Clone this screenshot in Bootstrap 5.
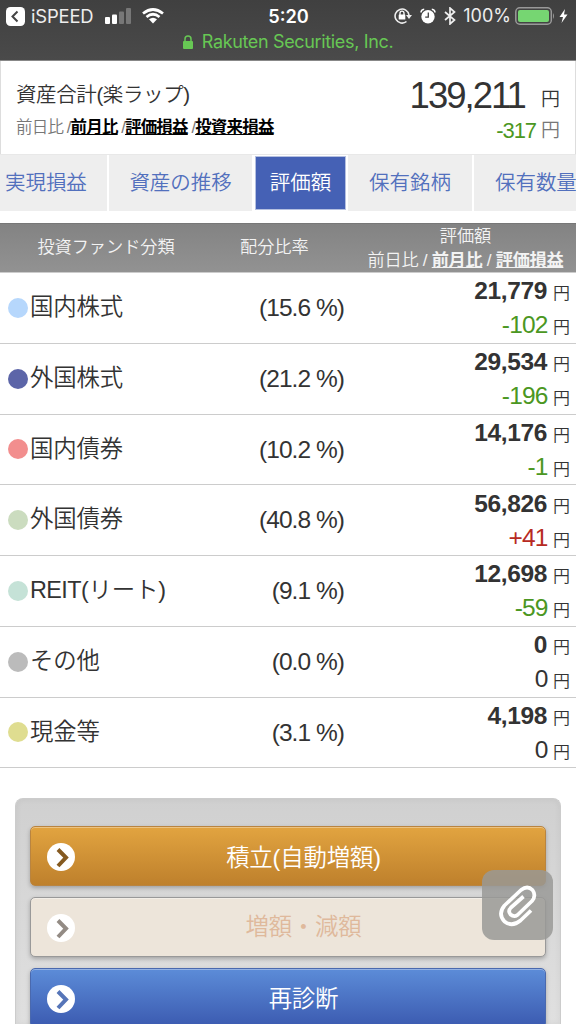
<!DOCTYPE html>
<html lang="ja">
<head>
<meta charset="utf-8">
<meta name="viewport" content="width=device-width, initial-scale=1">
<title>楽ラップ 評価額</title>
<link rel="stylesheet" href="https://cdn.jsdelivr.net/npm/bootstrap@5.3.0/dist/css/bootstrap.min.css">
<style>
body{font-family:"Liberation Sans","Noto Sans CJK JP",sans-serif;font-weight:350;color:#333;background:#fff;height:1024px;overflow:hidden;line-height:1;display:flex;flex-direction:column}
b{font-weight:700}
main{flex:1 1 0;min-height:0;display:flex;flex-direction:column}
.topbar{height:61px;flex:none;background:linear-gradient(#404040,#4a4a4a);border-bottom:1px solid #888;color:#eee;font-family:Inter,sans-serif;font-weight:400}
.statusline{height:31px;padding:1px 5px 0 6px;font-size:18.4px}
.statusline>div{flex:1 1 0}
.clock{font-weight:600;font-size:18.2px;color:#fff}
.site{height:22px;font-size:18px;letter-spacing:-.35px;color:#67c754}
.summary{height:93px;flex:none;padding:20px 15px 0 15px;border-left:1px solid #ddd;border-right:1px solid #ddd}
.sumtitle{font-size:20.5px;line-height:28px;letter-spacing:-.4px}
.sumlinks{font-size:16.5px;line-height:20px;margin-top:8px;letter-spacing:-.8px;color:#777}
.sumlinks span{letter-spacing:-.9px}
.sumlinks b{color:#000;text-decoration:underline;text-underline-offset:1px}
.total{font-size:36.5px;line-height:30px;letter-spacing:-2px}
.yen{font-size:19px;letter-spacing:0}
.total .yen{position:relative;top:-2px;margin-left:8px}
.totaldiff{font-size:22px;line-height:26px;margin-top:1px;letter-spacing:-1.1px;color:#777}
.totaldiff .yen{position:relative;top:-1px}
.down{color:#4b9722}.up{color:#b72a22}
.tabstrip{height:57px;flex:none;border-top:1px solid #e8e8e8;overflow:hidden}
.tabstrip .tabitem{height:56px;flex:none;background:#eee;color:#5270bd;font-size:20.5px;border-right:2px solid #fff;letter-spacing:-.05px}
.tabstrip .current{background:#4561b5;color:#fff;height:54px;margin:1px 2px 0 1px;border:1px solid #b5c0e0}
.fundhead{height:50px;flex:none;margin-top:12px;background:linear-gradient(#838383,#929292);border-top:1px solid #777;border-bottom:1.5px solid #ccc;color:#f3f3f3;font-size:17.2px;letter-spacing:-.05px}
.fundhead .links{letter-spacing:-.3px}
.fundrow{height:70.75px;flex:none;border-bottom:1.5px solid #ccc}
.gridcols{display:grid;grid-template-columns:212px 132px 1fr}
.dot{width:20px;height:20px;border-radius:50%;margin-left:8px;margin-right:2px;flex:none}
.fundname{font-size:23.4px;letter-spacing:-.15px}
.reit{letter-spacing:-.6px}
.ratio{font-size:24.5px;letter-spacing:-.95px;padding-top:1px}
.value{font-size:24.5px;line-height:34px;padding:1px 6px 0 0}
.value b{font-size:24.5px;letter-spacing:-.35px}
.value .yen{font-size:17px;margin-left:6px}
.value .chg{letter-spacing:-.85px;margin-right:-.5px}
.value .fig{display:flex;justify-content:flex-end;align-items:baseline;height:34px}
.panel{flex:1 1 0;min-height:0;overflow:hidden;margin:30px 15px 0;padding:27px 14px 0;border:1px solid #ccc;border-bottom:0;border-radius:8px 8px 0 0;background:linear-gradient(#d0d0d0,#e0e0e0);box-shadow:inset 0 0 6px rgba(0,0,0,.06)}
.action{width:100%;height:60px;padding:4px 0 0 31px;border-radius:5px;margin-bottom:10.7px;font-size:23.4px;font-weight:350;letter-spacing:-.15px;color:#fff;box-shadow:inset 0 1px 0 rgba(255,255,255,.35),0 2px 4px rgba(0,0,0,.25)}
.pale.action{padding-top:2px}
.action svg{left:15px;top:15px}
.gold{background:linear-gradient(#e2a440,#be802c);border:1.5px solid #b98440}
.pale,.pale:disabled{background:#ede5da;border:1.5px solid #999;color:#dfb99c;opacity:1}
.blue{background:linear-gradient(#5c8cd8,#3b5ab0);border:1.5px solid #4a69ae}
.clip{left:482px;top:870px;width:71px;height:70px;border-radius:12px;background:rgba(153,153,150,.84);border:0}
</style>
</head>
<body>
<header class="topbar">
  <div class="statusline d-flex align-items-center">
    <div class="d-flex align-items-center">
      <svg width="19" height="19" viewBox="0 0 19 19"><rect width="19" height="19" rx="4.5" fill="#fff"/><path d="M11.5 4.5 6.5 9.5l5 5" fill="none" stroke="#444" stroke-width="2"/></svg>
      <span style="margin-left:6px;letter-spacing:-.15px">iSPEED</span>
      <svg width="27" height="16" viewBox="0 0 27 16" style="margin-left:12px"><g fill="#fff"><rect y="9" width="5" height="7" rx="1"/><rect x="7" y="6.500" width="5" height="9.500" rx="1"/></g><g fill="#777"><rect x="14" y="3.500" width="5" height="12.500" rx="1"/><rect x="21" y="0" width="5" height="16" rx="1"/></g></svg>
      <svg width="22" height="16" viewBox="0 0 22 16" style="margin-left:10px"><g fill="none" stroke="#fff" stroke-width="2.700"><path d="M1 5.500Q11-2.500 21 5.500"/><path d="M4.500 9Q11 3.500 17.500 9"/></g><path d="M7 11.300Q11 8 15 11.300L11 15.500Z" fill="#fff"/></svg>
    </div>
    <span class="clock">5:20</span>
    <div class="d-flex align-items-center justify-content-end">
      <svg width="18" height="18" viewBox="0 0 18 18"><path d="M12.500 14.500A7 7 0 1 1 15 8" fill="none" stroke="#eee" stroke-width="1.600"/><path d="M12 8h6l-3 4Z" fill="#eee"/><rect x="4.700" y="7.500" width="6.600" height="5" rx=".5" fill="#fff"/><path d="M6 8V6.200a2 2 0 0 1 4 0V8" fill="none" stroke="#fff" stroke-width="1.300"/></svg>
      <svg width="16" height="16" viewBox="0 0 16 16" style="margin-left:8px"><circle cx="8" cy="8.700" r="6.700" fill="#fff"/><path d="M8.300 4.500v4.700H5.200" fill="none" stroke="#444" stroke-width="1.300"/><path d="M1 4.500Q1 1.500 4.200 1.200M15 4.500Q15 1.500 11.800 1.200" fill="none" stroke="#fff" stroke-width="1.500"/></svg>
      <svg width="12" height="18" viewBox="0 0 12 18" style="margin-left:8px"><path d="M1 5l9.500 8L6 17V1l4.500 4L1 13" fill="none" stroke="#eee" stroke-width="1.700"/></svg>
      <span style="margin-left:7px;font-size:18px">100%</span>
      <svg width="41" height="18" viewBox="0 0 41 18" style="margin-left:4px"><rect x=".8" y=".8" width="35.500" height="16.400" rx="4" fill="none" stroke="#999" stroke-width="1.500"/><rect x="3" y="3" width="31" height="12" rx="2" fill="#76d672"/><path d="M38 6q2 3 0 6Z" fill="#999"/></svg>
      <svg width="9" height="16" viewBox="0 0 9 16" style="margin-left:3px;margin-right:3px"><path d="M6 1 .5 9H4L2.500 15 8.500 6.500H5Z" fill="#fff"/></svg>
    </div>
  </div>
  <div class="site d-flex align-items-center justify-content-center">
    <svg width="10" height="14" viewBox="0 0 10 14" style="margin-right:9px"><rect y="6" width="10" height="8" rx="1" fill="#67c754"/><path d="M2 7V4a3 3 0 0 1 6 0v3" fill="none" stroke="#67c754" stroke-width="1.500"/></svg>
    <span>Rakuten Securities, Inc.</span>
  </div>
</header>

<section class="summary d-flex justify-content-between">
  <div>
    <div class="sumtitle">資産合計(楽ラップ)</div>
    <div class="sumlinks text-nowrap">前日比<span> /</span><b>前月比</b><span> /</span><b>評価損益</b><span> /</span><b>投資来損益</b></div>
  </div>
  <div class="text-end">
    <div class="total">139,211 <span class="yen">円</span></div>
    <div class="totaldiff"><span class="down">-317</span> <span class="yen">円</span></div>
  </div>
</section>

<nav class="tabstrip d-flex">
  <div class="tabitem d-flex align-items-center" style="width:109px;padding-left:5px">実現損益</div>
  <div class="tabitem d-flex align-items-center justify-content-center" style="width:145px">資産の推移</div>
  <div class="tabitem current d-flex align-items-center justify-content-center" style="width:91px">評価額</div>
  <div class="tabitem d-flex align-items-center justify-content-center" style="width:126px">保有銘柄</div>
  <div class="tabitem d-flex align-items-center" style="width:125px;padding-left:21px">保有数量</div>
</nav>

<main>
  <div class="fundhead gridcols align-items-center">
    <div class="text-center">投資ファンド分類</div>
    <div class="ps-4 ms-1">配分比率</div>
    <div class="text-center text-nowrap" style="line-height:24px;padding-left:22px;padding-right:11px">評価額<br><span class="links">前日比 / <b class="text-decoration-underline">前月比</b> / <b class="text-decoration-underline">評価損益</b></span></div>
  </div>
  <div class="fundrow gridcols align-items-center"><div class="d-flex align-items-center"><i class="dot" style="background:#b6d7fc"></i><span class="fundname">国内株式</span></div><div class="ratio text-end">(15.6 %)</div><div class="value"><div class="fig"><b>21,779</b><span class="yen">円</span></div><div class="fig"><span class="chg down">-102</span><span class="yen">円</span></div></div></div>
  <div class="fundrow gridcols align-items-center"><div class="d-flex align-items-center"><i class="dot" style="background:#5c65a8"></i><span class="fundname">外国株式</span></div><div class="ratio text-end">(21.2 %)</div><div class="value"><div class="fig"><b>29,534</b><span class="yen">円</span></div><div class="fig"><span class="chg down">-196</span><span class="yen">円</span></div></div></div>
  <div class="fundrow gridcols align-items-center"><div class="d-flex align-items-center"><i class="dot" style="background:#f28e8e"></i><span class="fundname">国内債券</span></div><div class="ratio text-end">(10.2 %)</div><div class="value"><div class="fig"><b>14,176</b><span class="yen">円</span></div><div class="fig"><span class="chg down">-1</span><span class="yen">円</span></div></div></div>
  <div class="fundrow gridcols align-items-center"><div class="d-flex align-items-center"><i class="dot" style="background:#cbdcbf"></i><span class="fundname">外国債券</span></div><div class="ratio text-end">(40.8 %)</div><div class="value"><div class="fig"><b>56,826</b><span class="yen">円</span></div><div class="fig"><span class="chg up">+41</span><span class="yen">円</span></div></div></div>
  <div class="fundrow gridcols align-items-center"><div class="d-flex align-items-center"><i class="dot" style="background:#c5e2d7"></i><span class="fundname"><span class="reit">REIT</span>(リート)</span></div><div class="ratio text-end">(9.1 %)</div><div class="value"><div class="fig"><b>12,698</b><span class="yen">円</span></div><div class="fig"><span class="chg down">-59</span><span class="yen">円</span></div></div></div>
  <div class="fundrow gridcols align-items-center"><div class="d-flex align-items-center"><i class="dot" style="background:#bbb"></i><span class="fundname">その他</span></div><div class="ratio text-end">(0.0 %)</div><div class="value"><div class="fig"><b>0</b><span class="yen">円</span></div><div class="fig"><span class="chg">0</span><span class="yen">円</span></div></div></div>
  <div class="fundrow gridcols align-items-center"><div class="d-flex align-items-center"><i class="dot" style="background:#dfdd90"></i><span class="fundname">現金等</span></div><div class="ratio text-end">(3.1 %)</div><div class="value"><div class="fig"><b>4,198</b><span class="yen">円</span></div><div class="fig"><span class="chg">0</span><span class="yen">円</span></div></div></div>

  <section class="panel">
    <button class="btn action gold position-relative"><svg class="position-absolute" width="30" height="30" viewBox="0 0 30 30"><circle cx="15" cy="15" r="14" fill="#fff"/><path d="m12 7.500 8 8-8 8.500" fill="none" stroke="#855a20" stroke-width="4"/></svg>積立(自動増額)</button>
    <button class="btn action pale position-relative" disabled><svg class="position-absolute" width="30" height="30" viewBox="0 0 30 30"><circle cx="15" cy="15" r="14" fill="#fff"/><path d="m12 7.500 8 8-8 8.500" fill="none" stroke="#938b84" stroke-width="4"/></svg>増額・減額</button>
    <button class="btn action blue position-relative mb-0"><svg class="position-absolute" width="30" height="30" viewBox="0 0 30 30"><circle cx="15" cy="15" r="14" fill="#fff"/><path d="m12 7.500 8 8-8 8.500" fill="none" stroke="#5675b8" stroke-width="4"/></svg>再診断</button>
  </section>
</main>

<button class="clip position-absolute p-0" aria-label="添付"><svg class="d-block" width="71" height="70" viewBox="0 0 71 70"><path d="M49 40.500 38.500 50.500Q30 57.500 22.500 51.500Q15.500 44 22.500 35.500L39 20Q45.500 15 50.500 20Q54.500 25.500 50 31L35.500 45Q32 47.500 28.500 44.500Q25.500 41 29 37.500L41.500 26.500" fill="none" stroke="#fff" stroke-width="3.700" stroke-linejoin="round"/></svg></button>
<script src="https://cdn.jsdelivr.net/npm/bootstrap@5.3.0/dist/js/bootstrap.bundle.min.js"></script>
</body>
</html>
